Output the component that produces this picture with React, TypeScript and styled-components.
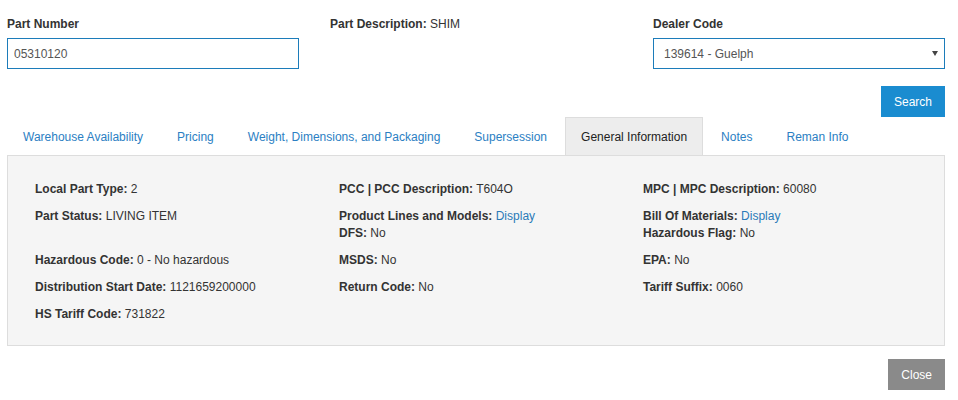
import React from 'react';
import styled, {createGlobalStyle} from 'styled-components';

const GlobalStyle = createGlobalStyle`
  body {
    margin: 0;
    background: #fff;
    font-family: "Liberation Sans", Arial, sans-serif;
    font-size: 12px;
    color: #333;
  }
`;

type Field = {label: string; value: string; link?: boolean};
type Cell = Field[];

const rows: Cell[][] = [
  [
    [{label: 'Local Part Type', value: '2'}],
    [{label: 'PCC | PCC Description', value: 'T604O'}],
    [{label: 'MPC | MPC Description', value: '60080'}],
  ],
  [
    [{label: 'Part Status', value: 'LIVING ITEM'}],
    [{label: 'Product Lines and Models', value: 'Display', link: true}, {label: 'DFS', value: 'No'}],
    [{label: 'Bill Of Materials', value: 'Display', link: true}, {label: 'Hazardous Flag', value: 'No'}],
  ],
  [
    [{label: 'Hazardous Code', value: '0 - No hazardous'}],
    [{label: 'MSDS', value: 'No'}],
    [{label: 'EPA', value: 'No'}],
  ],
  [
    [{label: 'Distribution Start Date', value: '1121659200000'}],
    [{label: 'Return Code', value: 'No'}],
    [{label: 'Tariff Suffix', value: '0060'}],
  ],
  [
    [{label: 'HS Tariff Code', value: '731822'}],
  ],
];

const tabs = [
  'Warehouse Availability',
  'Pricing',
  'Weight, Dimensions, and Packaging',
  'Supersession',
  'General Information',
  'Notes',
  'Reman Info',
];

const App = () => {
  return (
    <>
      <GlobalStyle/>
      <Page>
        <SearchForm>
          <FormGroup>
            <Label>Part Number</Label>
            <TextInput defaultValue="05310120"/>
          </FormGroup>
          <FormGroup>
            <Label>Part Description: <Value>SHIM</Value></Label>
          </FormGroup>
          <FormGroup>
            <Label>Dealer Code</Label>
            <SelectWrap>
              <Select defaultValue="139614">
                <option value="139614">139614 - Guelph</option>
              </Select>
              <Caret/>
            </SelectWrap>
          </FormGroup>
        </SearchForm>

        <ButtonRow>
          <Button $variant="primary">Search</Button>
        </ButtonRow>

        <TabList>
          {tabs.map((tab) => (
            <Tab key={tab} $active={tab === 'General Information'}>{tab}</Tab>
          ))}
        </TabList>

        <Panel>
          {rows.map((row, idx) => (
            <InfoRow key={idx}>
              {row.map((cell, cIdx) => (
                <InfoCell key={cIdx}>
                  {cell.map((field) => (
                    <Line key={field.label}>
                      <b>{field.label}:</b>{' '}
                      {field.link ? <Link href="#">{field.value}</Link> : field.value}
                    </Line>
                  ))}
                </InfoCell>
              ))}
            </InfoRow>
          ))}
        </Panel>

        <ButtonRow>
          <Button $variant="default">Close</Button>
        </ButtonRow>
      </Page>
    </>
  );
};

export default App;

const Page = styled.div`
  width: 938px;
  padding: 16px 13px 0 7px;
`;

const SearchForm = styled.div`
  display: grid;
  grid-template-columns: 1fr 1fr 1fr;
  column-gap: 31px;
`;

const FormGroup = styled.div`
  display: flex;
  flex-direction: column;
`;

const Label = styled.div`
  font-weight: bold;
  line-height: 17px;
  margin-bottom: 5px;
  color: #333;
`;

const Value = styled.span`
  font-weight: normal;
`;

const TextInput = styled.input`
  box-sizing: border-box;
  height: 31px;
  width: 100%;
  padding: 0 6px;
  border: 1px solid #1c7cba;
  font-family: inherit;
  font-size: 12px;
  color: #555;
  outline: none;
`;

const SelectWrap = styled.div`
  position: relative;
`;

const Select = styled.select`
  box-sizing: border-box;
  height: 31px;
  width: 100%;
  padding: 0 10px;
  border: 1px solid #1c7cba;
  border-radius: 0;
  background: #fff;
  appearance: none;
  font-family: inherit;
  font-size: 12px;
  color: #555;
  outline: none;
`;

const Caret = styled.span`
  position: absolute;
  right: 7px;
  top: 13px;
  width: 0;
  height: 0;
  border-left: 3px solid transparent;
  border-right: 3px solid transparent;
  border-top: 5px solid #444;
  pointer-events: none;
`;

const ButtonRow = styled.div`
  display: flex;
  justify-content: flex-end;
  margin-top: 17px;

  &:last-child {
    margin-top: 13px;
  }
`;

const Button = styled.button<{ $variant: 'primary' | 'default' }>`
  height: 31px;
  padding: 0 13px;
  border: none;
  border-radius: 0;
  font-family: inherit;
  font-size: 12px;
  color: #fff;
  background: ${(p) => (p.$variant === 'primary' ? '#1a8cd0' : '#8a8a8a')};
  cursor: pointer;
`;

const TabList = styled.div`
  display: flex;
  height: 38px;
`;

const Tab = styled.div<{ $active?: boolean }>`
  display: flex;
  align-items: center;
  box-sizing: border-box;
  padding: 0 15px;
  margin-right: 2px;
  color: ${(p) => (p.$active ? '#222' : '#2b80c3')};
  background: ${(p) => (p.$active ? '#ededed' : 'transparent')};
  border: 1px solid ${(p) => (p.$active ? '#ddd' : 'transparent')};
  border-bottom: none;
  cursor: pointer;
`;

const Panel = styled.div`
  background: #f5f5f5;
  border: 1px solid #ddd;
  padding: 25px 12px 12px;
`;

const InfoRow = styled.div`
  display: grid;
  grid-template-columns: repeat(3, 1fr);
  margin-bottom: 10px;
`;

const InfoCell = styled.div`
  padding: 0 15px;
`;

const Line = styled.div`
  line-height: 17px;
  color: #333;
`;

const Link = styled.a`
  color: #2a7ab8;
  text-decoration: none;
`;
